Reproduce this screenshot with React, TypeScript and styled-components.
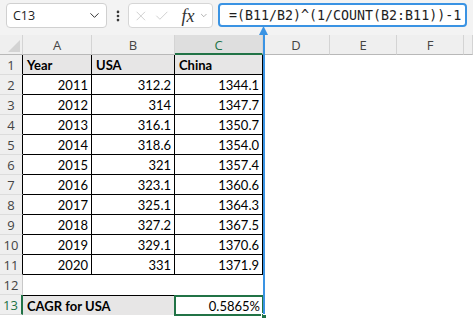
import React from "react";
import styled, {createGlobalStyle} from "styled-components";
import {ChevronDown, EllipsisVertical, X, Check} from "lucide-react";

const GREEN = "#217346";
const BLUE = "#3a93e3";

const GlobalStyle = createGlobalStyle`
  html, body {
    margin: 0;
    padding: 0;
    background: #ffffff;
    overflow: hidden;
  }
  body {
    font-family: "Open Sans", "Noto Sans", sans-serif;
  }
`;

const Page = styled.div`
  position: relative;
  width: 473px;
  height: 321px;
  background: #ffffff;
  overflow: hidden;
`;

const Toolbar = styled.div`
  display: flex;
  align-items: flex-start;
  height: 35px;
  padding: 3px 0 0 6px;
  box-sizing: border-box;
  background: #f3f3f3;
`;

const NameBox = styled.div`
  display: flex;
  align-items: center;
  justify-content: space-between;
  width: 101px;
  height: 25px;
  padding: 0 4px 0 6px;
  box-sizing: border-box;
  background: #ffffff;
  border: 1px solid #d0d0d0;
  border-radius: 4px;
  font-size: 12.5px;
  color: #222222;
`;

const Dots = styled.div`
  display: flex;
  align-items: center;
  justify-content: center;
  width: 21px;
  height: 25px;
  color: #333333;
`;

const FxBox = styled.div`
  display: flex;
  align-items: center;
  width: 85px;
  height: 25px;
  padding: 0 3px 0 4px;
  gap: 5px;
  box-sizing: border-box;
  background: #ffffff;
  border: 1px solid #d6d6d6;
  border-radius: 4px;
  color: #c4c4c4;
`;

const Fx = styled.span`
  margin-left: 7px;
  font-family: "Liberation Serif", "DejaVu Serif", serif;
  font-style: italic;
  font-size: 18px;
  color: #333333;
  line-height: 1;
`;

const FormulaInput = styled.div`
  display: flex;
  align-items: center;
  width: 249px;
  height: 24px;
  margin-left: 5px;
  padding-left: 9px;
  box-sizing: border-box;
  background: #ffffff;
  border: 2px solid ${BLUE};
  border-radius: 4px;
  font-family: "DejaVu Sans Mono", "Liberation Mono", monospace;
  font-size: 13.3px;
  color: #1e1e1e;
  white-space: nowrap;
`;

const Sheet = styled.div`
  display: grid;
  grid-template-columns: 23px 69px 83px 88px 67px 67px 67px 1fr;
  grid-template-rows: repeat(14, 20px);
`;

const Corner = styled.div`
  position: relative;
  background: #efefef;
  border-right: 1px solid #d4d4d4;
  border-bottom: 1px solid #b8b8b8;
  box-sizing: border-box;
`;

const ColHeader = styled.div<{$active?: boolean}>`
  display: flex;
  align-items: center;
  justify-content: center;
  box-sizing: border-box;
  background: ${(p) => (p.$active ? "#dedede" : "#efefef")};
  border-right: 1px solid #d4d4d4;
  border-bottom: ${(p) => (p.$active ? `2px solid ${GREEN}` : "1px solid #b8b8b8")};
  color: ${(p) => (p.$active ? GREEN : "#444444")};
  font-size: 13px;
  padding-top: 1px;
`;

const RowHeader = styled.div<{$edge: string; $active?: boolean}>`
  display: flex;
  align-items: center;
  justify-content: center;
  box-sizing: border-box;
  background: #efefef;
  border-right: ${(p) => (p.$active ? `2px solid ${GREEN}` : `1px solid ${p.$edge}`)};
  border-bottom: 1px solid #dcdcdc;
  color: ${(p) => (p.$active ? GREEN : "#444444")};
  font-size: 13px;
`;

const Cell = styled.div<{
  $right?: boolean;
  $bold?: boolean;
  $fill?: string;
  $boxed?: boolean;
  $top?: boolean;
  $span?: number;
}>`
  position: relative;
  display: flex;
  align-items: flex-end;
  justify-content: ${(p) => (p.$right ? "flex-end" : "flex-start")};
  grid-column: ${(p) => (p.$span ? `span ${p.$span}` : "auto")};
  padding: 0 3px 2px 4px;
  box-sizing: border-box;
  background: ${(p) => p.$fill ?? "#ffffff"};
  border-right: ${(p) => (p.$boxed ? "1px solid #000" : "none")};
  border-bottom: ${(p) => (p.$boxed ? "1px solid #000" : "none")};
  border-top: ${(p) => (p.$top ? "1px solid #000" : "none")};
  font-family: "Lato", "Open Sans", sans-serif;
  font-size: 13px;
  font-weight: ${(p) => (p.$bold ? 700 : 400)};
  color: #000000;
  line-height: 1;
  white-space: nowrap;
`;

const Selection = styled.div`
  position: absolute;
  left: -1px;
  top: -1px;
  right: -1px;
  bottom: -1px;
  border: 2px solid ${GREEN};
  pointer-events: none;
`;

const FillHandle = styled.div`
  position: absolute;
  right: -4px;
  bottom: -4px;
  width: 6px;
  height: 6px;
  background: ${GREEN};
  border: 1px solid #ffffff;
  box-sizing: border-box;
`;

const Pointer = styled.div`
  position: absolute;
  left: 259px;
  top: 26px;
  width: 9px;
  height: 288px;
  display: flex;
  flex-direction: column;
  align-items: center;
  pointer-events: none;
`;

const PointerLine = styled.div`
  flex: 1;
  width: 2px;
  margin-top: -1px;
  background: ${BLUE};
`;

const years = [2011, 2012, 2013, 2014, 2015, 2016, 2017, 2018, 2019, 2020];
const usa = ["312.2", "314", "316.1", "318.6", "321", "323.1", "325.1", "327.2", "329.1", "331"];
const china = ["1344.1", "1347.7", "1350.7", "1354.0", "1357.4", "1360.6", "1364.3", "1367.5", "1370.6", "1371.9"];
const cols = ["A", "B", "C", "D", "E", "F"];

const Blanks: React.FC<{count: number}> = ({count}) => (
  <>
    {Array.from({length: count}).map((_, i) => (
      <Cell key={i} />
    ))}
  </>
);

const App: React.FC = () => {
  return (
    <Page>
      <GlobalStyle />
      <Toolbar>
        <NameBox>
          <span>C13</span>
          <ChevronDown size={15} color="#333" strokeWidth={1.6} />
        </NameBox>
        <Dots>
          <EllipsisVertical size={14} strokeWidth={2.6} />
        </Dots>
        <FxBox>
          <X size={18} strokeWidth={1.2} />
          <Check size={18} strokeWidth={1.2} />
          <Fx>fx</Fx>
          <ChevronDown size={11} color="#888" strokeWidth={1.6} />
        </FxBox>
        <FormulaInput>=(B11/B2)^(1/COUNT(B2:B11))-1</FormulaInput>
      </Toolbar>

      <Sheet>
        <Corner>
          <svg width="23" height="20" style={{position: "absolute", left: 0, top: 0}}>
            <polygon points="8,17 20,17 20,5" fill="#d3d3d3" />
          </svg>
        </Corner>
        {cols.map((c) => (
          <ColHeader key={c} $active={c === "C"}>
            {c}
          </ColHeader>
        ))}
        <ColHeader />

        <RowHeader $edge="#000">1</RowHeader>
        <Cell $boxed $bold $fill="#e7e6e6">Year</Cell>
        <Cell $boxed $bold $fill="#e7e6e6">USA</Cell>
        <Cell $boxed $bold $fill="#e7e6e6">China</Cell>
        <Blanks count={4} />

        {years.map((y, i) => (
          <React.Fragment key={y}>
            <RowHeader $edge="#000">{i + 2}</RowHeader>
            <Cell $boxed $right>{y}</Cell>
            <Cell $boxed $right>{usa[i]}</Cell>
            <Cell $boxed $right>{china[i]}</Cell>
            <Blanks count={4} />
          </React.Fragment>
        ))}

        <RowHeader $edge="#c8c8c8">12</RowHeader>
        <Blanks count={7} />

        <RowHeader $edge="#000" $active>13</RowHeader>
        <Cell $span={2} $bold $top $fill="#e7e6e6">CAGR for USA</Cell>
        <Cell $right $top>
          0.5865%
          <Selection />
          <FillHandle />
        </Cell>
        <Blanks count={4} />
      </Sheet>

      <Pointer>
        <svg width="9" height="9" viewBox="0 0 9 9">
          <polygon points="4.5,0 9,9 0,9" fill={BLUE} />
        </svg>
        <PointerLine />
      </Pointer>
    </Page>
  );
};

export default App;
